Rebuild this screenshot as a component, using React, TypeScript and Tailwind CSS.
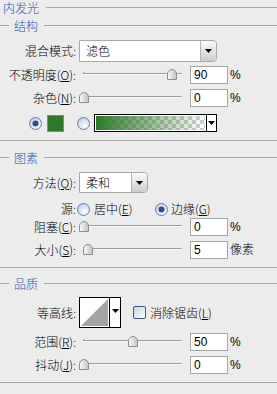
import React from "react";

const LINE = "bg-[#A6A6A6]";

function Arrow() {
  return (
    <svg width="7" height="4" viewBox="0 0 7 4">
      <path d="M0 0 H7 L3.5 4 Z" fill="#000" />
    </svg>
  );
}

function Radio({ on }: { on?: boolean }) {
  return (
    <svg width="13" height="13" viewBox="0 0 13 13" className="shrink-0">
      <defs>
        <radialGradient id="rg" cx="0.62" cy="0.68" r="0.75">
          <stop offset="0" stopColor="#ffffff" />
          <stop offset="1" stopColor="#bccce2" />
        </radialGradient>
      </defs>
      <circle cx="6.5" cy="6.5" r="6" fill="url(#rg)" stroke="#6580aa" />
      {on && <circle cx="6.5" cy="6.5" r="3" fill="#2b4f8e" />}
    </svg>
  );
}

function Thumb({ left }: { left: number }) {
  return (
    <svg
      width="10"
      height="11"
      viewBox="0 0 10 11"
      className="absolute top-[3px]"
      style={{ left }}
    >
      <defs>
        <linearGradient id="tg" x1="0" x2="1" y1="0" y2="0">
          <stop offset="0" stopColor="#fbfbfb" />
          <stop offset="1" stopColor="#c2c2c2" />
        </linearGradient>
      </defs>
      <path
        d="M0.5 4.5 Q0.5 2.5 3 1 L5 0.5 L7 1 Q9.5 2.5 9.5 4.5 V10.5 H0.5 Z"
        fill="url(#tg)"
        stroke="#8e8e8e"
      />
    </svg>
  );
}

function Slider({ left }: { left: number }) {
  return (
    <div className="relative ml-[3px] w-[108px] h-full shrink-0">
      <div className="absolute left-[4px] top-[6px] w-px h-[3px] bg-[#9a9a9a]" />
      <div className="absolute left-[4px] top-[7px] w-[99px] h-px bg-[#9c9c9c]" />
      <div className="absolute left-[4px] top-[8px] w-[99px] h-px bg-[#f8f8f8]" />
      <Thumb left={left} />
    </div>
  );
}

function Num({ v }: { v: string }) {
  return (
    <div className="ml-[3px] w-[38px] h-[18px] shrink-0 border border-[#A5A5A5] bg-white flex items-center pl-[3px] font-['Liberation_Sans',sans-serif] text-[12px]">
      {v}
    </div>
  );
}

function Lbl({ children }: { children: React.ReactNode }) {
  return <div className="w-[76px] shrink-0 text-right whitespace-nowrap">{children}</div>;
}

function U({ c }: { c: string }) {
  return <span className="underline underline-offset-1">{c}</span>;
}

function Group({ title, className = "" }: { title: string; className?: string }) {
  return (
    <div className={`h-[15px] flex items-center ${className}`}>
      <div className={`w-[9px] h-px ${LINE}`} />
      <span className="ml-[5px] text-[#1F55B4]">{title}</span>
      <div className={`ml-[6px] flex-1 h-px ${LINE}`} />
    </div>
  );
}

function SliderRow({
  label,
  left,
  v,
  unit = "%",
  className = "",
}: {
  label: React.ReactNode;
  left: number;
  v: string;
  unit?: string;
  className?: string;
}) {
  return (
    <div className={`h-[18px] flex items-center ${className}`}>
      <Lbl>{label}</Lbl>
      <Slider left={left} />
      <Num v={v} />
      <span className="ml-[2px] font-['Liberation_Sans','Noto_Sans_CJK_SC',sans-serif]">
        {unit}
      </span>
    </div>
  );
}

function Dropdown({ w, text }: { w: string; text: string }) {
  return (
    <div
      className={`ml-[3px] ${w} h-full border border-[#A9A9A9] bg-white flex items-center rounded-r-[4px] shrink-0`}
    >
      <span className="pl-[6px] flex-1">{text}</span>
      <div className="w-[16px] h-full border-l border-[#B4B4B4] bg-linear-to-b from-[#FBFBFB] to-[#CDCDCD] rounded-r-[4px] flex items-center justify-center">
        <Arrow />
      </div>
    </div>
  );
}

export default function App() {
  return (
    <div className="w-[277px] h-[394px] overflow-hidden bg-[#ECECEC] text-black text-[12px] leading-none font-light font-['Noto_Sans_CJK_SC','Noto_Sans',sans-serif] flex flex-col">
      {/* 内发光 */}
      <div className="h-[15px] flex items-center">
        <span className="ml-[3px] text-[#1F55B4]">内发光</span>
        <div className={`ml-[7px] flex-1 h-px ${LINE}`} />
      </div>

      <Group title="结构" className="mt-[3px]" />

      <div className="mt-[7px] h-[22px] flex items-center">
        <Lbl>混合模式:</Lbl>
        <Dropdown w="w-[138px]" text="滤色" />
      </div>

      <SliderRow className="mt-[4px]" label={<>不透明度(<U c="O" />):</>} left={88} v="90" />
      <SliderRow className="mt-[5px]" label={<>杂色(<U c="N" />):</>} left={0} v="0" />

      {/* color row */}
      <div className="mt-[7px] h-[18px] flex items-center pl-[29px]">
        <Radio on />
        <div className="ml-[5px] w-[17px] h-[17px] border border-[#7d8f7d] bg-[#2E7A2A]" />
        <div className="ml-[13px]">
          <Radio />
        </div>
        <div className="ml-[4px] w-[123px] h-[18px] border border-black flex bg-white">
          <div className="flex-1 border border-white bg-[image:repeating-conic-gradient(#cfcfcf_0%_25%,#ffffff_0%_50%)] bg-[length:8px_8px]">
            <div className="w-full h-full bg-linear-to-r from-[#2E7A2A] via-[#2E7A2A]/50 to-[#2E7A2A]/0" />
          </div>
          <div className="w-[10px] border-l border-black bg-white flex items-center justify-center">
            <Arrow />
          </div>
        </div>
      </div>

      <div className={`mt-[8px] h-px ${LINE}`} />

      <Group title="图素" className="mt-[9px]" />

      <div className="mt-[7px] h-[21px] flex items-center">
        <Lbl>方法(<U c="Q" />):</Lbl>
        <Dropdown w="w-[69px]" text="柔和" />
      </div>

      <div className="mt-[8px] h-[16px] flex items-center">
        <Lbl>源:</Lbl>
        <div className="ml-[1px] w-[78px] flex items-center">
          <Radio />
          <span className="ml-[4px]">居中(<U c="E" />)</span>
        </div>
        <div className="flex items-center">
          <Radio on />
          <span className="ml-[3px]">边缘(<U c="G" />)</span>
        </div>
      </div>

      <SliderRow className="mt-[1px]" label={<>阻塞(<U c="C" />):</>} left={0} v="0" />
      <SliderRow className="mt-[5px]" label={<>大小(<U c="S" />):</>} left={4} v="5" unit="像素" />

      <div className={`mt-[8px] h-px ${LINE}`} />

      <Group title="品质" className="mt-[8px]" />

      <div className="mt-[6px] h-[31px] flex items-center">
        <Lbl>等高线:</Lbl>
        <div className="ml-[3px] w-[42px] h-[31px] border border-black bg-white flex shrink-0">
          <div className="w-[29px] h-full p-px">
            <svg width="27" height="27" viewBox="0 0 27 27" className="block">
              <polygon points="0,27 27,0 27,27" fill="#A4A4A4" />
            </svg>
          </div>
          <div className="flex-1 border-l border-black flex items-center justify-center pb-[3px]">
            <Arrow />
          </div>
        </div>
        <div className="ml-[12px] w-[13px] h-[13px] rounded-[2px] border border-[#3D5A86] bg-linear-to-br from-[#C9D3E2] to-[#FFFFFF] shrink-0" />
        <span className="ml-[4px] whitespace-nowrap">消除锯齿(<U c="L" />)</span>
      </div>

      <SliderRow className="mt-[5px]" label={<>范围(<U c="R" />):</>} left={49} v="50" />
      <SliderRow className="mt-[5px]" label={<>抖动(<U c="J" />):</>} left={0} v="0" />

      <div className={`mt-[8px] h-px ${LINE}`} />
    </div>
  );
}
